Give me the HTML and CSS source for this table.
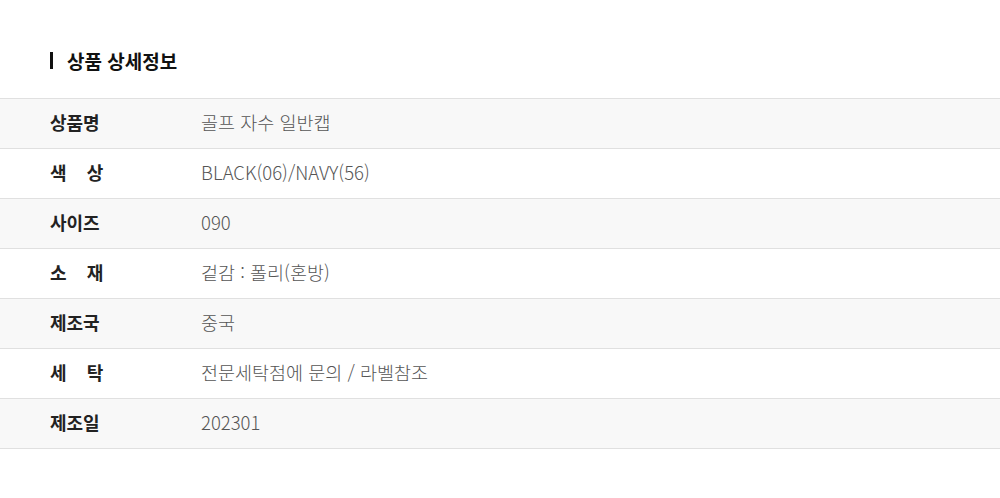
FILE: index.html
```html
<!DOCTYPE html>
<html lang="ko">
<head>
<meta charset="utf-8">
<link rel="stylesheet" href="styles.css">
</head>
<body>
<div class="page">
  <h2 class="title">상품 상세정보</h2>
  <table class="info">
    <tr class="odd"><th>상품명</th><td>골프 자수 일반캡</td></tr>
    <tr><th>색&nbsp;&nbsp;&nbsp;&nbsp;상</th><td>BLACK(06)/NAVY(56)</td></tr>
    <tr class="odd"><th>사이즈</th><td>090</td></tr>
    <tr><th>소&nbsp;&nbsp;&nbsp;&nbsp;재</th><td>겉감 : 폴리(혼방)</td></tr>
    <tr class="odd"><th>제조국</th><td>중국</td></tr>
    <tr><th>세&nbsp;&nbsp;&nbsp;&nbsp;탁</th><td>전문세탁점에 문의 / 라벨참조</td></tr>
    <tr class="odd"><th>제조일</th><td>202301</td></tr>
  </table>
</div>
</body>
</html>
```

FILE: styles.css
```css
html, body {
  margin: 0;
  padding: 0;
  background: #fff;
  font-family: "Noto Sans CJK KR", "Noto Sans", sans-serif;
}
.page {
  padding-top: 52px;
}
.title {
  margin: 0 0 29px 50px;
  padding-left: 14px;
  border-left: 3px solid #111;
  font-size: 19px;
  font-weight: 700;
  color: #111;
  line-height: 17px;
  height: 17px;
  display: flex;
  align-items: center;
}
.info {
  width: 100%;
  border-collapse: collapse;
  border-top: 1px solid #e0e0e0;
}
.info tr {
  height: 50px;
  border-bottom: 1px solid #e0e0e0;
}
.info tr.odd {
  background: #f8f8f8;
}
.info th {
  width: 151px;
  padding: 0 0 3px 50px;
  text-align: left;
  font-size: 18px;
  font-weight: 700;
  color: #222;
  white-space: pre;
}
.info td {
  padding: 0 0 3px 0;
  font-size: 18.5px;
  font-weight: 300;
  color: #555;
}
```
